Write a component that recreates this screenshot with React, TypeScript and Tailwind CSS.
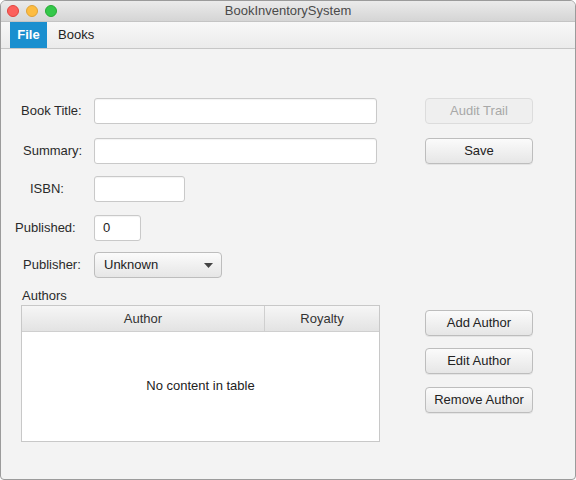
import React from 'react';

const font = { fontFamily: '"Liberation Sans", Arial, sans-serif' };

const Button: React.FC<{ label: string; disabled?: boolean; className?: string }> = ({ label, disabled, className = '' }) => (
  <div
    className={`w-[108px] h-[26px] flex items-center justify-center rounded-[4px] border text-[13px] ${
      disabled
        ? 'border-[#dcdcdc] bg-[#efefef] text-[#a8a8a8]'
        : 'border-[#bdbdbd] bg-gradient-to-b from-[#fbfbfb] to-[#e6e6e6] text-[#222] shadow-[0_1px_0_rgba(0,0,0,0.06)]'
    } ${className}`}
  >
    {label}
  </div>
);

const Field: React.FC<{ label: string; labelLeft: string; width: string; value?: string; className?: string }> = ({
  label,
  labelLeft,
  width,
  value,
  className = '',
}) => (
  <div className={`flex items-center ${className}`}>
    <div className="w-[93px] flex">
      <span className={`${labelLeft} text-[13px] text-[#2a2a2a]`}>{label}</span>
    </div>
    <div
      className={`${width} h-[26px] bg-white border border-[#c9c9c9] rounded-[3px] shadow-[inset_0_1px_1px_rgba(0,0,0,0.05)] flex items-center px-[8px] text-[13px] text-[#222]`}
    >
      {value}
    </div>
  </div>
);

export default function App() {
  return (
    <div
      className="w-[576px] h-[480px] bg-[#f3f3f3] border border-[#9b9b9b] rounded-t-[6px] rounded-b-[4px] overflow-hidden flex flex-col"
      style={font}
    >
      {/* title bar */}
      <div className="h-[21px] shrink-0 relative flex items-center justify-center bg-gradient-to-b from-[#ebebeb] to-[#d5d5d5] border-b border-[#c4c4c4]">
        <div className="absolute left-[6px] top-[4px] flex gap-[7px]">
          <span className="w-[12px] h-[12px] rounded-full bg-[#fc605c] border border-[#e0443e]" />
          <span className="w-[12px] h-[12px] rounded-full bg-[#fdbc40] border border-[#dea236]" />
          <span className="w-[12px] h-[12px] rounded-full bg-[#34c84a] border border-[#27aa35]" />
        </div>
        <span className="text-[13px] text-[#4a4a4a]">BookInventorySystem</span>
      </div>

      {/* menu bar */}
      <div className="h-[27px] shrink-0 flex items-stretch bg-gradient-to-b from-[#f8f8f8] to-[#ebebeb] border-b border-[#c6c6c6] pl-[9px]">
        <div className="w-[37px] bg-[#1a8fcf] text-white font-bold text-[13px] flex items-center justify-center">File</div>
        <div className="px-[11px] text-[13px] text-[#222] flex items-center">Books</div>
      </div>

      {/* content */}
      <div className="flex pt-[49px]">
        <div className="w-[424px] shrink-0 flex flex-col">
          <Field label="Book Title:" labelLeft="ml-[20px]" width="w-[283px]" />
          <Field label="Summary:" labelLeft="ml-[22px]" width="w-[283px]" className="mt-[14px]" />
          <Field label="ISBN:" labelLeft="ml-[29px]" width="w-[91px]" className="mt-[12px]" />
          <Field label="Published:" labelLeft="ml-[14px]" width="w-[47px]" value="0" className="mt-[13px]" />
          <div className="flex items-center mt-[11px]">
            <div className="w-[93px] flex">
              <span className="ml-[22px] text-[13px] text-[#2a2a2a]">Publisher:</span>
            </div>
            <div className="w-[128px] h-[26px] rounded-[4px] border border-[#bdbdbd] bg-gradient-to-b from-[#fbfbfb] to-[#e6e6e6] flex items-center justify-between pl-[9px] pr-[8px] text-[13px] text-[#222]">
              <span>Unknown</span>
              <svg width="9" height="5" viewBox="0 0 9 5">
                <path d="M0 0 L9 0 L4.5 5 Z" fill="#444" />
              </svg>
            </div>
          </div>
          <div className="ml-[21px] mt-[10px] text-[13px] text-[#2a2a2a] leading-[16px]">Authors</div>
          <div className="ml-[20px] mt-[1px] w-[359px] h-[137px] bg-white border border-[#c8c8c8] flex flex-col">
            <div className="h-[26px] shrink-0 flex bg-gradient-to-b from-[#f6f6f6] to-[#e3e3e3] border-b border-[#cfcfcf] text-[13px] text-[#333]">
              <div className="w-[243px] flex items-center justify-center border-r border-[#cfcfcf]">Author</div>
              <div className="flex-1 flex items-center justify-center">Royalty</div>
            </div>
            <div className="flex-1 flex items-center justify-center text-[13px] text-[#222] pb-[2px]">No content in table</div>
          </div>
        </div>

        <div className="flex flex-col">
          <Button label="Audit Trail" disabled />
          <Button label="Save" className="mt-[14px]" />
          <Button label="Add Author" className="mt-[146px]" />
          <Button label="Edit Author" className="mt-[12px]" />
          <Button label="Remove Author" className="mt-[13px]" />
        </div>
      </div>
    </div>
  );
}
